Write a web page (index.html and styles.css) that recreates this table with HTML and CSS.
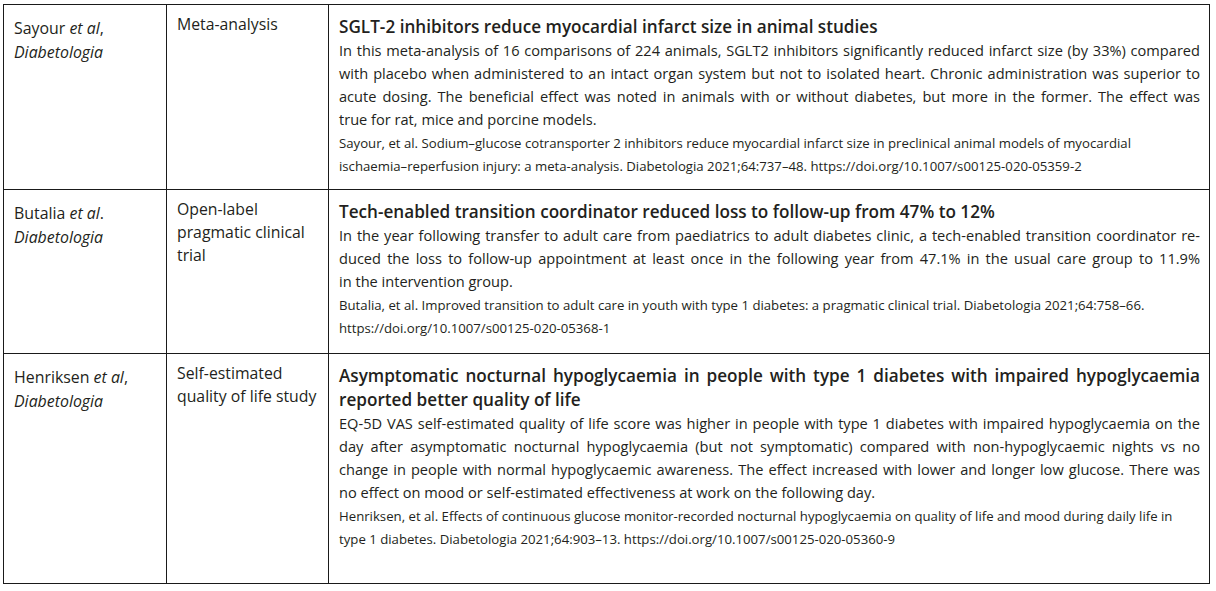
FILE: index.html
```html
<!DOCTYPE html>
<html lang="en">
<head>
<meta charset="utf-8">
<title>Diabetologia studies</title>
<link rel="stylesheet" href="styles.css">
</head>
<body>
<table class="studies">
  <colgroup>
    <col class="c-source">
    <col class="c-type">
    <col class="c-summary">
  </colgroup>
  <tbody>
    <tr class="row row-1">
      <td class="source">Sayour <i>et al</i>,<br><i>Diabetologia</i></td>
      <td class="type">Meta-analysis</td>
      <td class="summary">
        <h2 class="title">SGLT-2 inhibitors reduce myocardial infarct size in animal studies</h2>
        <p class="body">
          <span class="ln">In this meta-analysis of 16 comparisons of 224 animals, SGLT2 inhibitors significantly reduced infarct size (by 33%) compared</span>
          <span class="ln">with placebo when administered to an intact organ system but not to isolated heart. Chronic administration was superior to</span>
          <span class="ln">acute dosing. The beneficial effect was noted in animals with or without diabetes, but more in the former. The effect was</span>
          <span class="ln-last">true for rat, mice and porcine models.</span>
        </p>
        <p class="ref">Sayour, et al. Sodium–glucose cotransporter 2 inhibitors reduce myocardial infarct size in preclinical animal models of myocardial ischaemia–reperfusion injury: a meta-analysis. Diabetologia 2021;64:737–48. https://doi.org/10.1007/s00125-020-05359-2</p>
      </td>
    </tr>
    <tr class="row row-2">
      <td class="source">Butalia <i>et al</i>.<br><i>Diabetologia</i></td>
      <td class="type">Open-label pragmatic clinical trial</td>
      <td class="summary">
        <h2 class="title">Tech-enabled transition coordinator reduced loss to follow-up from 47% to 12%</h2>
        <p class="body">
          <span class="ln">In the year following transfer to adult care from paediatrics to adult diabetes clinic, a tech-enabled transition coordinator re-</span>
          <span class="ln">duced the loss to follow-up appointment at least once in the following year from 47.1% in the usual care group to 11.9%</span>
          <span class="ln-last">in the intervention group.</span>
        </p>
        <p class="ref">Butalia, et al. Improved transition to adult care in youth with type 1 diabetes: a pragmatic clinical trial. Diabetologia 2021;64:758–66. https://doi.org/10.1007/s00125-020-05368-1</p>
      </td>
    </tr>
    <tr class="row row-3">
      <td class="source">Henriksen <i>et al</i>,<br><i>Diabetologia</i></td>
      <td class="type">Self-estimated quality of life study</td>
      <td class="summary">
        <h2 class="title title-just">Asymptomatic nocturnal hypoglycaemia in people with type 1 diabetes with impaired hypoglycaemia reported better quality of life</h2>
        <p class="body">
          <span class="ln">EQ-5D VAS self-estimated quality of life score was higher in people with type 1 diabetes with impaired hypoglycaemia on the</span>
          <span class="ln">day after asymptomatic nocturnal hypoglycaemia (but not symptomatic) compared with non-hypoglycaemic nights vs no</span>
          <span class="ln">change in people with normal hypoglycaemic awareness. The effect increased with lower and longer low glucose. There was</span>
          <span class="ln-last">no effect on mood or self-estimated effectiveness at work on the following day.</span>
        </p>
        <p class="ref">Henriksen, et al. Effects of continuous glucose monitor-recorded nocturnal hypoglycaemia on quality of life and mood during daily life in type 1 diabetes. Diabetologia 2021;64:903–13. https://doi.org/10.1007/s00125-020-05360-9</p>
      </td>
    </tr>
  </tbody>
</table>
</body>
</html>
```

FILE: styles.css
```css
html, body {
  margin: 0;
  padding: 0;
  background: #ffffff;
}

body {
  padding: 4px 0 0 3px;
  font-family: "Open Sans", "Noto Sans", "Liberation Sans", sans-serif;
  color: #231f20;
}

.studies {
  border-collapse: collapse;
  table-layout: fixed;
  width: 1207px;
}

.c-source { width: 163px; }
.c-type { width: 162px; }

.studies td {
  border: 1px solid #1a1a1a;
  vertical-align: top;
  padding: 0 9px 0 10px;
}

.row-1 { height: 185px; }
.row-2 { height: 164px; }
.row-3 { height: 230px; }

.studies .source {
  padding-top: 11px;
  font-size: 15.9px;
  line-height: 24px;
}

.studies .type {
  padding-top: 8px;
  font-size: 15.8px;
  line-height: 23px;
}

.studies .summary {
  padding-top: 10px;
  font-size: 15px;
}

.title {
  margin: 0;
  font-size: 17.15px;
  line-height: 24px;
  font-weight: 600;
  color: #231f20;
}

.title-just {
  text-align: justify;
}

.body {
  margin: 0;
  font-size: 14.6px;
  line-height: 23px;
}

.ln,
.ln-last {
  display: block;
  white-space: nowrap;
}

.ln {
  text-align: justify;
  text-align-last: justify;
}

.ref {
  margin: 1px 0 0;
  font-size: 13.2px;
  line-height: 23px;
}
```
